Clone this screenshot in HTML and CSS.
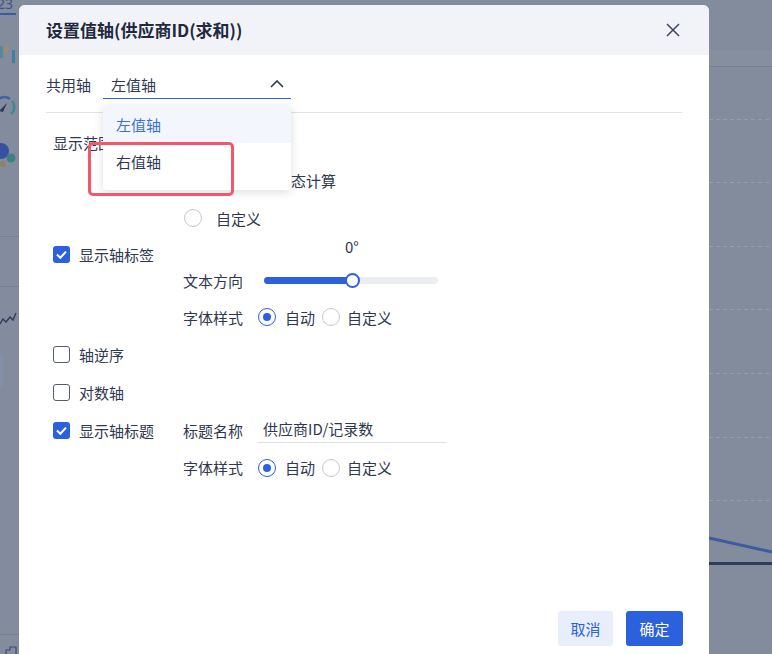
FILE: index.html
```html
<!DOCTYPE html>
<html lang="zh">
<head>
<meta charset="utf-8">
<title>设置值轴</title>
<link rel="stylesheet" href="styles.css">
</head>
<body>
<div class="backdrop">
  <svg class="side-art" viewBox="0 0 19 654" width="19" height="654">
    <text x="-3" y="9" class="side-num">23</text>
    <rect x="0" y="13" width="16" height="2" fill="#3c5aa2"/>
    <rect x="0" y="46" width="3" height="12" fill="#56889a"/>
    <rect x="5" y="45" width="3" height="8" fill="#a08c68"/>
    <rect x="12" y="50" width="3" height="13" fill="#3f7ea6"/>
    <path d="M-4 103 A9 9 0 0 1 10 99" stroke="#3d64a8" stroke-width="2.5" fill="none"/>
    <path d="M12 101 A9 9 0 0 1 11 114" stroke="#3f8a8f" stroke-width="2.5" fill="none"/>
    <path d="M-1 111 L7 103 L3 112 Z" fill="#2d3a5e"/>
    <circle cx="1" cy="151" r="8" fill="#3552a2"/>
    <circle cx="11" cy="158" r="4.5" fill="#3f7f86"/>
    <circle cx="3" cy="164" r="3" fill="#95805f"/>
    <rect x="0" y="236" width="19" height="1" fill="#78828f"/>
    <rect x="0" y="286" width="19" height="1" fill="#78828f"/>
    <polyline points="0,324 3,319 6,322 10,317 13,320 16,313" stroke="#2b3858" stroke-width="1.3" fill="none"/>
    <rect x="-10" y="353" width="13" height="35" rx="4" fill="#8390aa"/>
    <rect x="0" y="634" width="19" height="1" fill="#78828f"/>
    <path d="M6 654 V650 H10 V647 H16 V654" stroke="#3a4a70" stroke-width="1.2" fill="none"/>
  </svg>
  <svg class="chart-art" viewBox="0 0 63 654" width="63" height="654">
    <rect x="0" y="50" width="63" height="16" fill="#868fa0"/>
    <rect x="0" y="66" width="63" height="1" fill="#76808f"/>
    <g stroke="#959eac" stroke-width="1" stroke-dasharray="4 3">
      <line x1="0" y1="119.5" x2="63" y2="119.5"/>
      <line x1="0" y1="182.5" x2="63" y2="182.5"/>
      <line x1="0" y1="246.5" x2="63" y2="246.5"/>
      <line x1="0" y1="309.5" x2="63" y2="309.5"/>
      <line x1="0" y1="373.5" x2="63" y2="373.5"/>
      <line x1="0" y1="437.5" x2="63" y2="437.5"/>
      <line x1="0" y1="500.5" x2="63" y2="500.5"/>
    </g>
    <line x1="0" y1="538" x2="63" y2="552" stroke="#3e5ba2" stroke-width="3"/>
    <rect x="0" y="562" width="63" height="3" fill="#2d3d5f"/>
  </svg>
</div>

<div class="dialog">
  <div class="dlg-head">
    <h1 class="dlg-title">设置值轴(供应商ID(求和))</h1>
    <svg class="close" viewBox="0 0 14 14" width="14" height="14"><path d="M1 1 L13 13 M13 1 L1 13" stroke="#3c4559" stroke-width="1.5" fill="none"/></svg>
  </div>
  <div class="dlg-body">
    <div class="axis-row">
      <span class="axis-label">共用轴</span>
      <div class="select">
        <span>左值轴</span>
        <svg viewBox="0 0 14 8" width="14" height="8"><path d="M1 7 L7 1 L13 7" stroke="#2f3850" stroke-width="1.6" fill="none"/></svg>
      </div>
    </div>
    <div class="divider"></div>
    <div class="settings">
      <div class="row">
        <div class="left"><span class="lbl-range">显示范围</span></div>
        <div class="right">
          <div class="opt"><span class="radio"></span><span class="opt-text">自动</span></div>
          <div class="opt"><span class="radio"></span><span class="opt-text">根据数据动态计算</span></div>
          <div class="opt"><span class="radio"></span><span class="opt-text">自定义</span></div>
        </div>
      </div>

      <div class="row">
        <div class="left pad-check">
          <div class="check-item"><span class="check on"><svg viewBox="0 0 17 17" width="17" height="17"><path d="M4 8.5 L7.3 11.8 L13 5.6" stroke="#fff" stroke-width="2" fill="none"/></svg></span><span class="check-text">显示轴标签</span></div>
        </div>
        <div class="right">
          <div class="deg">0°</div>
          <div class="slider-row">
            <span class="sub-label w81">文本方向</span>
            <div class="track"><div class="fill" style="width:51%"></div><span class="thumb"></span></div>
          </div>
          <div class="font-row first">
            <span class="sub-label w75">字体样式</span>
            <span class="radio on"></span><span class="rtext">自动</span>
            <span class="radio gap"></span><span class="rtext">自定义</span>
          </div>
        </div>
      </div>

      <div class="row line">
        <div class="check-item"><span class="check"></span><span class="check-text">轴逆序</span></div>
      </div>
      <div class="row line">
        <div class="check-item"><span class="check"></span><span class="check-text">对数轴</span></div>
      </div>

      <div class="row">
        <div class="left line">
          <div class="check-item"><span class="check on"><svg viewBox="0 0 17 17" width="17" height="17"><path d="M4 8.5 L7.3 11.8 L13 5.6" stroke="#fff" stroke-width="2" fill="none"/></svg></span><span class="check-text">显示轴标题</span></div>
        </div>
        <div class="right">
          <div class="title-row">
            <span class="sub-label w75">标题名称</span>
            <div class="text-input">供应商ID/记录数</div>
          </div>
          <div class="font-row">
            <span class="sub-label w75">字体样式</span>
            <span class="radio on"></span><span class="rtext">自动</span>
            <span class="radio gap"></span><span class="rtext">自定义</span>
          </div>
        </div>
      </div>
    </div>
  </div>
  <div class="dlg-foot">
    <button class="btn btn-cancel">取消</button>
    <button class="btn btn-ok">确定</button>
  </div>

  <div class="dropdown">
    <div class="dd-item active">左值轴</div>
    <div class="dd-item">右值轴</div>
  </div>
  <div class="highlight"></div>
</div>
</body>
</html>
```
FILE: styles.css
```css
html, body {
  margin: 0;
  padding: 0;
}
body {
  width: 772px;
  height: 654px;
  overflow: hidden;
  background: #828c9c;
  font-family: "Noto Sans CJK SC", "Noto Sans", sans-serif;
  position: relative;
  color: #2f3850;
}
.backdrop {
  display: flex;
  justify-content: space-between;
  height: 654px;
}
.side-art, .chart-art {
  display: block;
}
.side-num {
  font-family: "Noto Sans", sans-serif;
  font-size: 14px;
  fill: #3d5288;
}

.dialog {
  position: absolute;
  left: 19px;
  top: 5px;
  width: 690px;
  height: 670px;
  background: #fff;
  border-radius: 6px;
  display: flex;
  flex-direction: column;
}
.dlg-head {
  height: 50px;
  flex: none;
  background: #f1f3f8;
  border-radius: 6px 6px 0 0;
  display: flex;
  align-items: center;
  justify-content: space-between;
  padding: 0 29px 0 27px;
}
.dlg-title {
  margin: 0;
  font-size: 17px;
  font-weight: 700;
  color: #1f2940;
  line-height: 24px;
}
.close {
  display: block;
}

.dlg-body {
  flex: 1;
  padding: 15px 26px 0 27px;
}
.axis-row {
  display: flex;
  align-items: center;
  height: 29px;
}
.axis-label {
  width: 57px;
  font-size: 15px;
}
.select {
  width: 188px;
  height: 29px;
  box-sizing: border-box;
  border-bottom: 1px solid #2c61de;
  display: flex;
  align-items: center;
  justify-content: space-between;
  padding: 0 7px 0 8px;
  font-size: 15px;
}
.select svg {
  display: block;
}
.divider {
  height: 1px;
  background: #dfe2e8;
  margin-top: 13px;
}

.settings {
  padding-left: 7px;
  margin-top: 11px;
  font-size: 15px;
}
.row {
  display: flex;
}
.left {
  width: 130px;
  flex: none;
}
.right {
  flex: 1;
}
.lbl-range {
  display: block;
  line-height: 38px;
}
.opt {
  height: 38px;
  display: flex;
  align-items: center;
}
.opt:first-child {
  height: 37px;
}
.radio {
  width: 18px;
  height: 18px;
  box-sizing: border-box;
  border: 1px solid #c4c8d0;
  border-radius: 50%;
  flex: none;
  background: #fff;
  position: relative;
}
.opt .radio {
  margin-left: 1px;
}
.radio.on {
  border-color: #2c61de;
}
.radio.on::after {
  content: "";
  position: absolute;
  left: 4px;
  top: 4px;
  width: 8px;
  height: 8px;
  border-radius: 50%;
  background: #2c61de;
}
.opt-text {
  margin-left: 14px;
  white-space: nowrap;
}

.pad-check {
  padding-top: 7px;
}
.check-item {
  display: flex;
  align-items: center;
  height: 20px;
}
.check {
  width: 17px;
  height: 17px;
  box-sizing: border-box;
  border: 1px solid #535c70;
  border-radius: 3px;
  flex: none;
}
.check.on {
  border: none;
  background: #2c61de;
}
.check svg {
  display: block;
}
.check-text {
  margin-left: 9px;
}
.row.line, .left.line {
  height: 38px;
  align-items: center;
  display: flex;
}

.deg {
  height: 20px;
  line-height: 20px;
  padding-left: 162px;
}
.slider-row {
  margin-top: 4px;
  height: 38px;
  display: flex;
  align-items: center;
}
.sub-label {
  flex: none;
}
.w81 { width: 81px; }
.w75 { width: 75px; }
.track {
  width: 174px;
  height: 7px;
  border-radius: 4px;
  background: #ebedf0;
  position: relative;
}
.fill {
  height: 7px;
  border-radius: 4px;
  background: #2c61de;
}
.thumb {
  position: absolute;
  left: 81px;
  top: -4px;
  width: 15px;
  height: 15px;
  box-sizing: border-box;
  border: 2px solid #2c61de;
  border-radius: 50%;
  background: #fff;
}
.font-row {
  height: 37px;
  display: flex;
  align-items: center;
}
.font-row.first {
  height: 36px;
}
.rtext {
  margin-left: 9px;
}
.radio.gap {
  margin-left: 7px;
}
.radio.gap + .rtext {
  margin-left: 7px;
}
.title-row {
  height: 38px;
  display: flex;
  align-items: center;
}
.text-input {
  width: 188px;
  height: 26px;
  box-sizing: border-box;
  border-bottom: 1px solid #dcdfe6;
  padding-left: 5px;
  line-height: 24px;
}

.dlg-foot {
  display: flex;
  justify-content: flex-end;
  gap: 13px;
  padding: 0 26px 29px;
}
.btn {
  height: 35px;
  border: none;
  border-radius: 3px;
  font-family: "Noto Sans CJK SC", "Noto Sans", sans-serif;
  font-size: 15px;
  padding: 0;
}
.btn-cancel {
  width: 55px;
  background: #e8eefc;
  color: #2c61de;
}
.btn-ok {
  width: 57px;
  background: #2c61de;
  color: #fff;
}

.dropdown {
  position: absolute;
  left: 84px;
  top: 101px;
  width: 188px;
  background: #fff;
  border-radius: 4px;
  box-shadow: 0 2px 10px rgba(30, 40, 60, 0.16);
  padding-bottom: 10px;
  overflow: hidden;
  font-size: 15px;
}
.dd-item {
  height: 37px;
  line-height: 37px;
  padding-left: 13px;
  color: #2f3850;
}
.dd-item.active {
  background: #f3f7fd;
  color: #3b6fe0;
}
.highlight {
  position: absolute;
  left: 69px;
  top: 137px;
  width: 146px;
  height: 54px;
  box-sizing: border-box;
  border: 3px solid #f4566b;
  border-radius: 5px;
}
```
